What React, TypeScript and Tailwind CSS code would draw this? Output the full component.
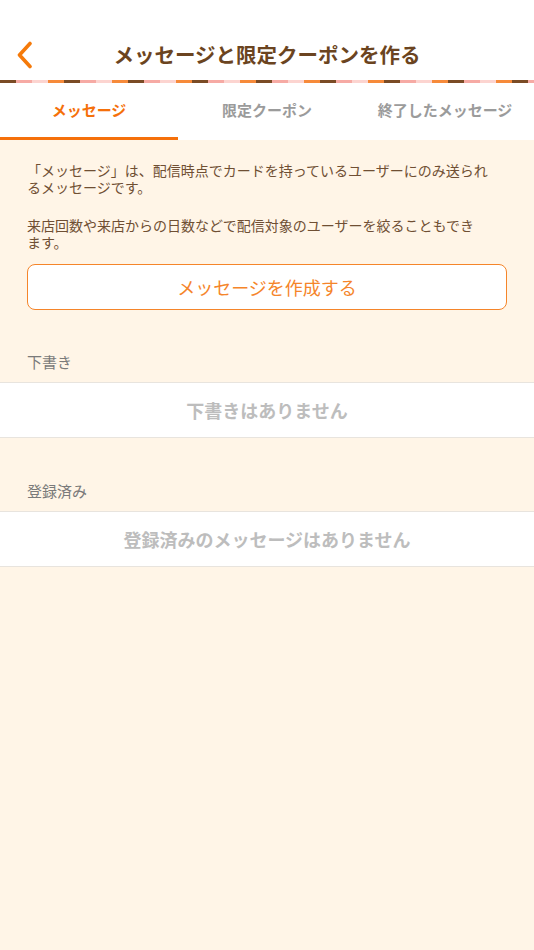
import React from "react";

const segClasses = ["bg-[#7a4b25]", "bg-[#f6aaa4]", "bg-[#fcd4d0]", "bg-[#f68a3a]"];

export default function App() {
  const segs = Array.from({ length: 34 }, (_, i) => i);
  return (
    <div
      className="w-[534px] h-[950px] bg-[#fff5e7] flex flex-col overflow-hidden"
      style={{ fontFamily: '"Noto Sans CJK JP", "Noto Sans", sans-serif' }}
    >
      {/* Header */}
      <div className="bg-white h-[80px] pt-[28px] flex items-center relative">
        <div className="absolute left-[16px] top-[41px]">
          <svg width="18" height="28" viewBox="0 0 18 28">
            <path d="M14 2.5 L3.5 14 L14 25.5" fill="none" stroke="#f57a0a" strokeWidth="3.6" strokeLinecap="round" strokeLinejoin="round" />
          </svg>
        </div>
        <div className="flex-1 text-center text-[20.5px] font-bold text-[#6b4420] leading-[28px]">
          メッセージと限定クーポンを作る
        </div>
      </div>
      {/* Stripe */}
      <div className="flex h-[3px] w-[534px] overflow-hidden">
        {segs.map((i) => (
          <div key={i} className={`w-[16px] shrink-0 h-full ${segClasses[i % 4]}`} />
        ))}
      </div>
      {/* Tabs */}
      <div className="bg-white h-[57px] flex">
        <div className="w-[178px] flex flex-col">
          <div className="flex-1 flex items-center justify-center text-[15px] font-bold text-[#f5700a]">メッセージ</div>
          <div className="h-[3px] bg-[#f5700a]" />
        </div>
        <div className="w-[178px] flex flex-col">
          <div className="flex-1 flex items-center justify-center text-[15px] font-bold text-[#9b9b9b]">限定クーポン</div>
          <div className="h-[3px]" />
        </div>
        <div className="w-[178px] flex flex-col">
          <div className="flex-1 flex items-center justify-center text-[15px] font-bold text-[#9b9b9b]">終了したメッセージ</div>
          <div className="h-[3px]" />
        </div>
      </div>
      {/* Content */}
      <div className="px-[27px] pt-[22px]">
        <p className="text-[14px] leading-[17px] text-[#6f4f33] whitespace-nowrap">
          「メッセージ」は、配信時点でカードを持っているユーザーにのみ送られ
          <br />
          るメッセージです。
        </p>
        <p className="mt-[21px] text-[14px] leading-[17px] text-[#6f4f33] whitespace-nowrap">
          来店回数や来店からの日数などで配信対象のユーザーを絞ることもでき
          <br />
          ます。
        </p>
        <div className="mt-[13px] h-[46px] rounded-[8px] border-[1.5px] border-[#f5852a] bg-white flex items-center justify-center text-[18px] text-[#f5852a]">
          メッセージを作成する
        </div>
      </div>
      <div className="px-[27px] mt-[42px] mb-[10px] text-[15px] leading-[20px] text-[#7a7a7a]">下書き</div>
      <div className="bg-white h-[56px] border-y border-[#e8e4de] flex items-center justify-center text-[18px] font-bold text-[#bdbdbd]">
        下書きはありません
      </div>
      <div className="px-[27px] mt-[43px] mb-[10px] text-[15px] leading-[20px] text-[#7a7a7a]">登録済み</div>
      <div className="bg-white h-[56px] border-y border-[#e8e4de] flex items-center justify-center text-[18px] font-bold text-[#bdbdbd]">
        登録済みのメッセージはありません
      </div>
    </div>
  );
}
